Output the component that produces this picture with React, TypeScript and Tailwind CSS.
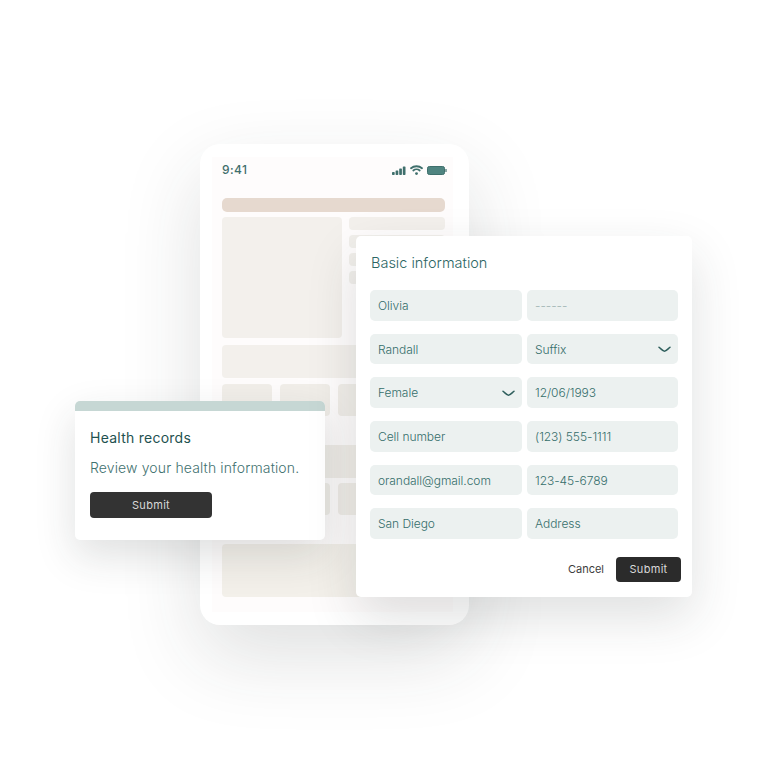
const fontStack = { fontFamily: "Inter, 'Noto Sans', sans-serif" };

function Chevron() {
  return (
    <svg width="13" height="7" viewBox="0 0 13 7" fill="none" className="text-[#2f5f5d]">
      <path d="M1 1.2C3.5 3.4 5 5.2 6.5 5.2S9.5 3.4 12 1.2" stroke="currentColor" strokeWidth="1.5" strokeLinecap="round" />
    </svg>
  );
}

function StatusIcons() {
  return (
    <div className="flex items-center gap-[4px] -mr-[2px] text-[#3f6f6c]">
      <svg width="14" height="9" viewBox="0 0 14 9" fill="currentColor">
        <rect x="0" y="6" width="2.7" height="3" rx="0.7" />
        <rect x="3.6" y="4.4" width="2.7" height="4.6" rx="0.7" />
        <rect x="7.2" y="2.4" width="2.7" height="6.6" rx="0.7" />
        <rect x="10.8" y="0.4" width="2.7" height="8.6" rx="0.7" />
      </svg>
      <svg width="13" height="10" viewBox="0 0 13 10" fill="none" stroke="currentColor" strokeWidth="1.8" strokeLinecap="round">
        <path d="M1 3.2C4 .6 9 .6 12 3.2" />
        <path d="M3.3 5.5C5 4.1 8 4.1 9.7 5.5" />
        <path d="M6.5 8.6 6.5 8.6" strokeWidth="2.8" />
      </svg>
      <svg width="20" height="9" viewBox="0 0 20 9">
        <rect x="0.5" y="0.5" width="17" height="8" rx="1.8" fill="#4f8480" stroke="#3f6f6c" />
        <rect x="18.4" y="3" width="1.2" height="3" rx="0.5" fill="#3f6f6c" />
      </svg>
    </div>
  );
}

function Phone() {
  return (
    <div className="absolute left-[200px] top-[144px] w-[269px] h-[481px] rounded-[20px] bg-white shadow-[0_30px_80px_rgba(40,50,50,0.15)] pl-[12px] pr-[16px] pt-[13px]">
      <div className="bg-[#fefcfc] h-[455px] pl-[10px] pr-[8px] pt-[5px]">
        <div className="flex items-center justify-between h-[16px]">
          <span className="text-[12px] font-medium tracking-[0.4px] text-[#3f6f6c]">9:41</span>
          <StatusIcons />
        </div>
        <div className="mt-[20px] h-[14px] rounded-[5px] bg-[#e6d9cf]" />
        <div className="mt-[5px] flex gap-[7px]">
          <div className="w-[120px] h-[121px] rounded-[4px] bg-[#f3f0ec]" />
          <div className="flex-1 flex flex-col gap-[5px]">
            <div className="h-[13px] rounded-[4px] bg-[#f3f0ec]" />
            <div className="h-[13px] rounded-[4px] bg-[#f1efeb]" />
            <div className="h-[13px] rounded-[4px] bg-[#f1efeb]" />
            <div className="h-[13px] rounded-[4px] bg-[#f1efeb]" />
          </div>
        </div>
        <div className="mt-[7px] h-[33px] rounded-[4px] bg-[#f3f0ec]" />
        <div className="mt-[6px] flex gap-[8px]">
          <div className="w-[50px] h-[32px] rounded-[4px] bg-[#f1eee9]" />
          <div className="w-[50px] h-[32px] rounded-[4px] bg-[#f1eee9]" />
          <div className="w-[50px] h-[32px] rounded-[4px] bg-[#f1eee9]" />
        </div>
        <div className="mt-[29px] h-[33px] rounded-[4px] bg-[#f1eee9]" />
        <div className="mt-[5px] flex gap-[8px]">
          <div className="w-[50px] h-[32px] rounded-[4px] bg-[#f1eee9]" />
          <div className="w-[50px] h-[32px] rounded-[4px] bg-[#f1eee9]" />
          <div className="w-[50px] h-[32px] rounded-[4px] bg-[#f1eee9]" />
        </div>
        <div className="mt-[29px] h-[53px] rounded-[4px] bg-[#f3f0ea]" />
      </div>
    </div>
  );
}

function HealthCard() {
  return (
    <div className="absolute left-[75px] top-[401px] w-[250px] h-[139px] rounded-[5px] overflow-hidden bg-white shadow-[0_16px_40px_rgba(40,50,50,0.15)]">
      <div className="h-[10px] bg-[#c6d7d4]" />
      <div className="px-[15px] pt-[17px]">
        <div className="text-[14px] leading-[20px] font-normal tracking-[0.25px] text-[#1f5250]">Health records</div>
        <div className="mt-[10px] text-[14px] leading-[20px] font-light tracking-[0.13px] text-[#3f7270] whitespace-nowrap">
          Review your health information.
        </div>
        <div className="mt-[14px] pt-[1px] w-[122px] h-[26px] rounded-[4px] bg-[#333333] flex items-center justify-center text-[11px] tracking-[0.3px] text-[#d9d9d9]">
          Submit
        </div>
      </div>
    </div>
  );
}

const fields: { label: string; chevron?: boolean; muted?: boolean }[] = [
  { label: "Olivia" },
  { label: "------", muted: true },
  { label: "Randall" },
  { label: "Suffix", chevron: true },
  { label: "Female", chevron: true },
  { label: "12/06/1993" },
  { label: "Cell number" },
  { label: "(123) 555-1111" },
  { label: "orandall@gmail.com" },
  { label: "123-45-6789" },
  { label: "San Diego" },
  { label: "Address" },
];

function FormCard() {
  return (
    <div className="absolute left-[356px] top-[236px] w-[336px] h-[361px] rounded-[5px] bg-white shadow-[0_20px_50px_rgba(40,50,50,0.15)] px-[14px] pt-[17px]">
      <div className="pl-[1px] text-[14.5px] leading-[20px] font-light tracking-[0] text-[#2c6664]">Basic information</div>
      <div className="mt-[17px] grid grid-cols-[152px_151px] gap-x-[5px] gap-y-[13px]">
        {fields.map((f) => (
          <div
            key={f.label}
            className={`h-[30.7px] rounded-[5px] bg-[#ecf1f0] pt-[1px] pl-[8px] pr-[7px] flex items-center justify-between text-[12px] font-light tracking-[-0.05px] ${
              f.muted ? "text-[#9db2b0]" : "text-[#356e6b]"
            }`}
          >
            <span>{f.label}</span>
            {f.chevron && <Chevron />}
          </div>
        ))}
      </div>
      <div className="mt-[18px] -mr-[3px] flex items-center justify-end gap-[12px]">
        <span className="text-[11px] tracking-[0] text-[#3d3d3d]">Cancel</span>
        <div className="w-[65px] h-[25px] rounded-[4px] bg-[#2b2b2b] flex items-center justify-center text-[11px] tracking-[0.3px] text-[#d9d9d9]">
          Submit
        </div>
      </div>
    </div>
  );
}

export default function App() {
  return (
    <div className="relative w-[768px] h-[768px] overflow-hidden bg-white" style={fontStack}>
      <Phone />
      <HealthCard />
      <FormCard />
    </div>
  );
}
